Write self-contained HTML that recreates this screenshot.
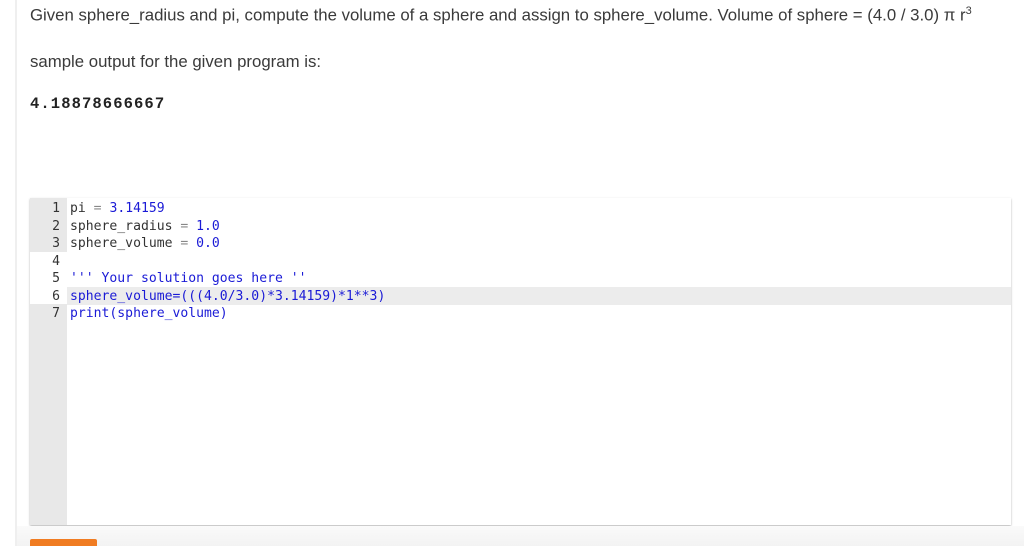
<!DOCTYPE html>
<html><head><meta charset="utf-8"><style>
html,body{margin:0;padding:0;width:1024px;height:546px;overflow:hidden;background:#fff;}
body{font-family:"Liberation Sans",sans-serif;color:#333;position:relative;}
.lb{position:absolute;left:15px;top:0;width:2px;height:546px;background:#efefef;}
.bot{position:absolute;left:17px;top:526px;width:1007px;height:20px;background:linear-gradient(#fafafa,#f3f3f3);}
.t{position:absolute;left:30px;white-space:nowrap;font-size:16.8px;font-weight:300;color:#3a3a3a;}
.out{position:absolute;left:30px;top:95px;font-family:"Liberation Mono",monospace;font-size:15.5px;font-weight:bold;color:#222;letter-spacing:1.1px;}
.ed{position:absolute;left:30px;top:198px;width:981px;height:327px;background:#fff;box-shadow:0 1px 2px rgba(0,0,0,0.3);}
.g{position:absolute;left:0;top:0;width:37px;height:327px;background:#e8e8e8;}
.gw{position:absolute;left:0;top:54px;width:37px;height:52px;background:#fff;}
.hl{position:absolute;left:37px;top:89px;width:944px;height:17.5px;background:#ececec;}
.code{position:absolute;left:0;top:2px;font-family:"DejaVu Sans Mono",monospace;font-size:13.1px;line-height:17.5px;}
.ln{display:inline-block;width:30px;text-align:right;color:#333;margin-right:10px;}
.b{color:#1a1ad6;}
.btn{position:absolute;left:30px;top:539px;width:67px;height:10px;background:#f07c22;border-radius:2px;}
</style></head><body>
<div class="lb"></div>
<div class="t" style="top:5px">Given sphere_radius and pi, compute the volume of a sphere and assign to sphere_volume. Volume of sphere = (4.0 / 3.0) π r<sup style="font-size:11px">3</sup></div>
<div class="t" style="top:52px">sample output for the given program is:</div>
<div class="out">4.18878666667</div>
<div class="ed">
<div class="g"></div><div class="gw"></div><div class="hl"></div>
<div class="code">
<div><span class="ln">1</span>pi <span style="color:#888">=</span> <span class="b">3.14159</span></div>
<div><span class="ln">2</span>sphere_radius <span style="color:#888">=</span> <span class="b">1.0</span></div>
<div><span class="ln">3</span>sphere_volume <span style="color:#888">=</span> <span class="b">0.0</span></div>
<div><span class="ln">4</span></div>
<div><span class="ln">5</span><span class="b">''' Your solution goes here ''</span></div>
<div><span class="ln">6</span><span class="b">sphere_volume=(((4.0/3.0)*3.14159)*1**3)</span></div>
<div><span class="ln">7</span><span class="b">print(sphere_volume)</span></div>
</div>
</div>
<div class="bot"></div>
<div class="btn"></div>
</body></html>
